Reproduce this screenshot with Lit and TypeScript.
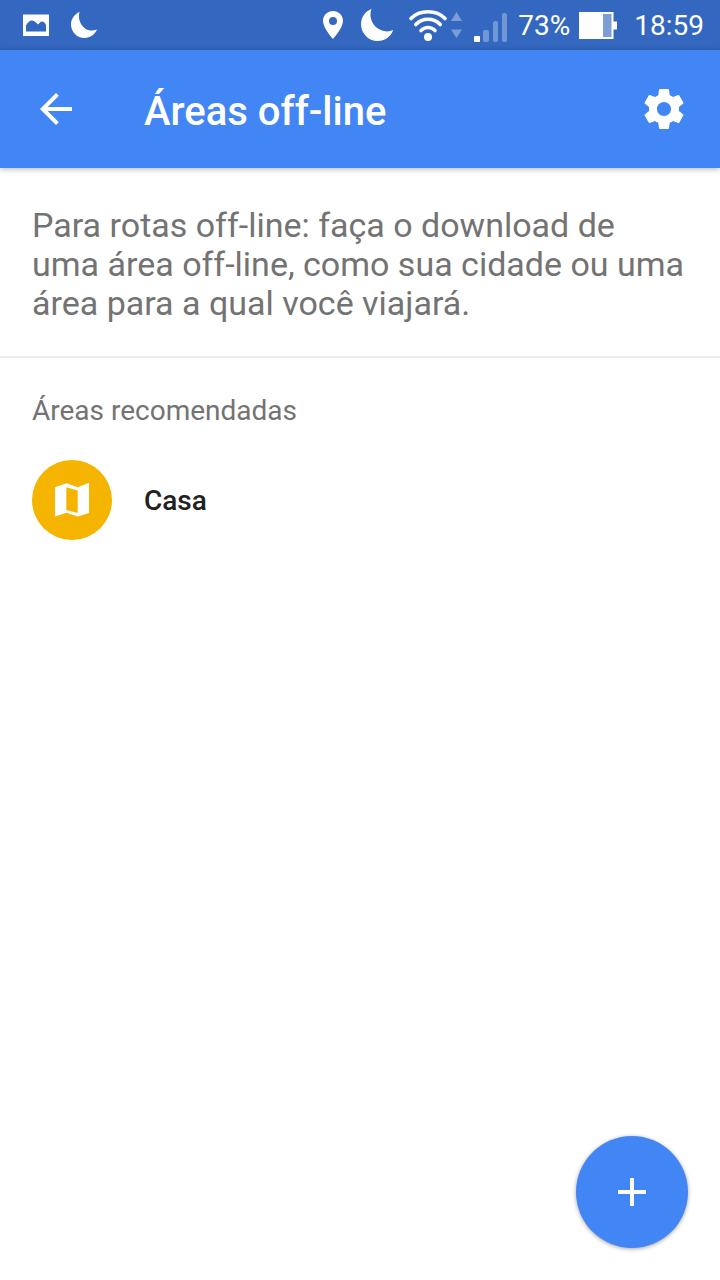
import { LitElement, html, css } from "lit";
import { customElement, property } from "lit/decorators.js";

@customElement("status-bar")
class StatusBar extends LitElement {
  @property() battery = "73%";
  @property() time = "18:59";

  static styles = css`
    :host {
      display: flex;
      justify-content: space-between;
      align-items: center;
      height: 50px;
      padding: 0 16px 0 22px;
      background: #3468c0;
      color: #fff;
      font-size: 28px;
      line-height: 34px;
    }
    .group {
      display: flex;
      align-items: center;
    }
    svg {
      display: block;
      flex: none;
    }
    span {
      padding-top: 2px;
    }
    .notices {
      gap: 20px;
    }
    .moon {
      margin: 0 14px 0 16px;
    }
    .signal {
      margin: 0 10px 0 12px;
    }
    .battery {
      margin: 0 16px 0 8px;
    }
  `;

  render() {
    return html`
      <div class="group notices">
        <svg width="28" height="50" viewBox="0 0 28 50" aria-hidden="true">
          <path fill="#fff" fill-rule="evenodd" d="M1 14.500h26V36H1zM4 31.500h20V25c-1-2.500-2.500-3.500-4-3.500s-2.500 1.500-4 3c-1.500-1.500-3.500-4-6-4S5.500 22.500 4 25.500z" />
        </svg>
        <svg width="28" height="50" viewBox="0 0 28 50" aria-hidden="true">
          <path fill="#fff" d="M9.500 12C5 14 1 18.500 1 24.500 1 32 7 38 14.500 38c6 0 10.500-4 12.500-8.500-2.500 1-4.500 1.300-7 1C13 29.500 7 21 9.500 12z" />
        </svg>
      </div>
      <div class="group">
        <svg width="22" height="50" viewBox="0 0 22 50" aria-hidden="true">
          <path fill="#fff" fill-rule="evenodd" d="M11 11C5.500 11 1 15.300 1 20.800 1 28 11 39 11 39s10-11 10-18.200C21 15.300 16.500 11 11 11zm0 6a4 4 0 1 1 0 8 4 4 0 0 1 0-8z" />
        </svg>
        <svg class="moon" width="34" height="50" viewBox="0 0 34 50" aria-hidden="true">
          <path fill="#fff" d="M11.500 9C5.500 11 1 17 1 24c0 9.500 7.500 17 16.500 17C25 41 31 36.500 33.200 30c-3.200 1.500-6.200 1.700-9.200 1C14 29 8 18.500 11.500 9z" />
        </svg>
        <svg width="54" height="50" viewBox="0 0 54 50" aria-hidden="true">
          <g fill="none" stroke="#fff" stroke-width="3.600" stroke-linecap="round">
            <path d="M3 18.500c8.500-9 25.500-9 34 0" />
            <path d="M7.800 24.500c6.500-7 18-7 24.500 0" />
            <path d="M13 30.500c4-4 10-4 14 0" />
          </g>
          <circle cx="20" cy="37" r="4" fill="#fff" />
          <path fill="#7c9dd6" d="M43 21l5.500-9 5.500 9zM43 29.500h11L48.500 38z" />
        </svg>
        <svg class="signal" width="34" height="50" viewBox="0 0 34 50" aria-hidden="true">
          <rect x="0" y="36" width="6" height="6" rx="1" fill="#fff" />
          <g fill="#7297d6">
            <rect x="9" y="30" width="6" height="12" rx="2" />
            <rect x="19" y="21" width="5" height="21" rx="2" />
            <rect x="28" y="13" width="5" height="29" rx="2" />
          </g>
        </svg>
        <span>${this.battery}</span>
        <svg class="battery" width="40" height="50" viewBox="0 0 40 50" aria-hidden="true">
          <path fill="#fff" d="M1 12h34.500v9.500H39v8h-3.500V39H1z" />
          <path fill="#7c9dd6" d="M25 14h8.500v23H25z" />
        </svg>
        <span>${this.time}</span>
      </div>
    `;
  }
}

@customElement("app-root")
class AppRoot extends LitElement {
  @property({ attribute: false }) areas = ["Casa"];

  static styles = css`
    :host {
      display: flex;
      flex-direction: column;
      min-height: 100vh;
      background: #fff;
      color: #737373;
      font-family: Roboto, "Liberation Sans", sans-serif;
    }
    button {
      border: 0;
      margin: 0;
      padding: 0;
      background: none;
      font: inherit;
      color: inherit;
      cursor: pointer;
    }
    svg {
      display: block;
    }
    h1,
    h2,
    p,
    ul {
      margin: 0;
      padding: 0;
    }
    .toolbar {
      display: flex;
      align-items: center;
      height: 118px;
      padding: 0 32px;
      background: #4285f4;
      color: #fff;
      box-shadow: 0 1px 6px rgba(0, 0, 0, 0.3);
    }
    h1 {
      flex: 1;
      padding: 6px 0 0 64px;
      font-size: 40px;
      line-height: 48px;
      font-weight: 500;
    }
    .intro {
      padding: 38px 32px 33px;
      border-bottom: 2px solid #ebebeb;
      font-size: 34px;
      line-height: 39px;
    }
    h2 {
      padding: 36px 32px 0;
      font-size: 28px;
      line-height: 34px;
      font-weight: 400;
    }
    ul {
      list-style: none;
      padding: 32px 0;
    }
    .area {
      display: flex;
      align-items: center;
      gap: 32px;
      width: 100%;
      padding: 0 32px;
      color: #212121;
      font-size: 28px;
      line-height: 34px;
      font-weight: 500;
      text-align: left;
    }
    .name {
      padding-top: 2px;
    }
    .badge {
      border-radius: 50%;
      background: #f4b400;
    }
    .fab {
      position: fixed;
      right: 32px;
      bottom: 32px;
      display: grid;
      place-items: center;
      width: 112px;
      height: 112px;
      border-radius: 50%;
      background: #4285f4;
      box-shadow: 0 1px 4px rgba(0, 0, 0, 0.35);
    }
  `;

  render() {
    return html`
      <status-bar></status-bar>
      <header class="toolbar">
        <button aria-label="Voltar">
          <svg width="48" height="48" viewBox="0 0 24 24" fill="#fff">
            <path d="M20 11H7.830l5.590-5.590L12 4l-8 8 8 8 1.410-1.410L7.830 13H20v-2z" />
          </svg>
        </button>
        <h1>Áreas off-line</h1>
        <button aria-label="Configurações">
          <svg width="48" height="48" viewBox="0 0 24 24" fill="#fff">
            <path d="M19.430 12.980c.04-.32.07-.64.07-.98s-.03-.66-.07-.98l2.110-1.650c.19-.15.24-.42.12-.64l-2-3.460c-.12-.22-.39-.3-.61-.22l-2.490 1c-.52-.4-1.080-.73-1.690-.98l-.38-2.650C14.460 2.180 14.250 2 14 2h-4c-.25 0-.46.18-.49.42l-.38 2.650c-.61.25-1.170.59-1.690.98l-2.490-1c-.23-.09-.49 0-.61.22l-2 3.460c-.13.22-.07.49.12.64l2.110 1.650c-.04.32-.07.65-.07.98s.03.66.07.98l-2.110 1.650c-.19.15-.24.42-.12.64l2 3.460c.12.22.39.3.61.22l2.490-1c.52.4 1.080.73 1.690.98l.38 2.650c.03.24.24.42.49.42h4c.25 0 .46-.18.49-.42l.38-2.650c.61-.25 1.170-.59 1.690-.98l2.490 1c.23.09.49 0 .61-.22l2-3.460c.12-.22.07-.49-.12-.64l-2.110-1.650zM12 15.500c-1.930 0-3.500-1.570-3.500-3.500s1.570-3.500 3.500-3.500 3.500 1.570 3.500 3.500-1.570 3.500-3.500 3.500z" />
          </svg>
        </button>
      </header>
      <main>
        <p class="intro">
          Para rotas off-line: faça o download de uma área off-line, como sua cidade ou uma área para a qual você viajará.
        </p>
        <h2>Áreas recomendadas</h2>
        <ul>
          ${this.areas.map(
            (name) => html`<li>
              <button class="area">
                <svg class="badge" width="80" height="80" viewBox="0 0 80 80" aria-hidden="true">
                  <path fill="#fff" fill-rule="evenodd" d="M23 27.300L34.500 23.300 45.700 27.300 57 22.700V53L45.700 56.500 34.500 52.700 23 56.500zM34.300 27.300V50l11.400 3V30.500z" />
                </svg>
                <span class="name">${name}</span>
              </button>
            </li>`
          )}
        </ul>
      </main>
      <button class="fab" aria-label="Adicionar área">
        <svg width="48" height="48" viewBox="0 0 24 24" fill="#fff">
          <path d="M19 13h-6v6h-2v-6H5v-2h6V5h2v6h6v2z" />
        </svg>
      </button>
    `;
  }
}
